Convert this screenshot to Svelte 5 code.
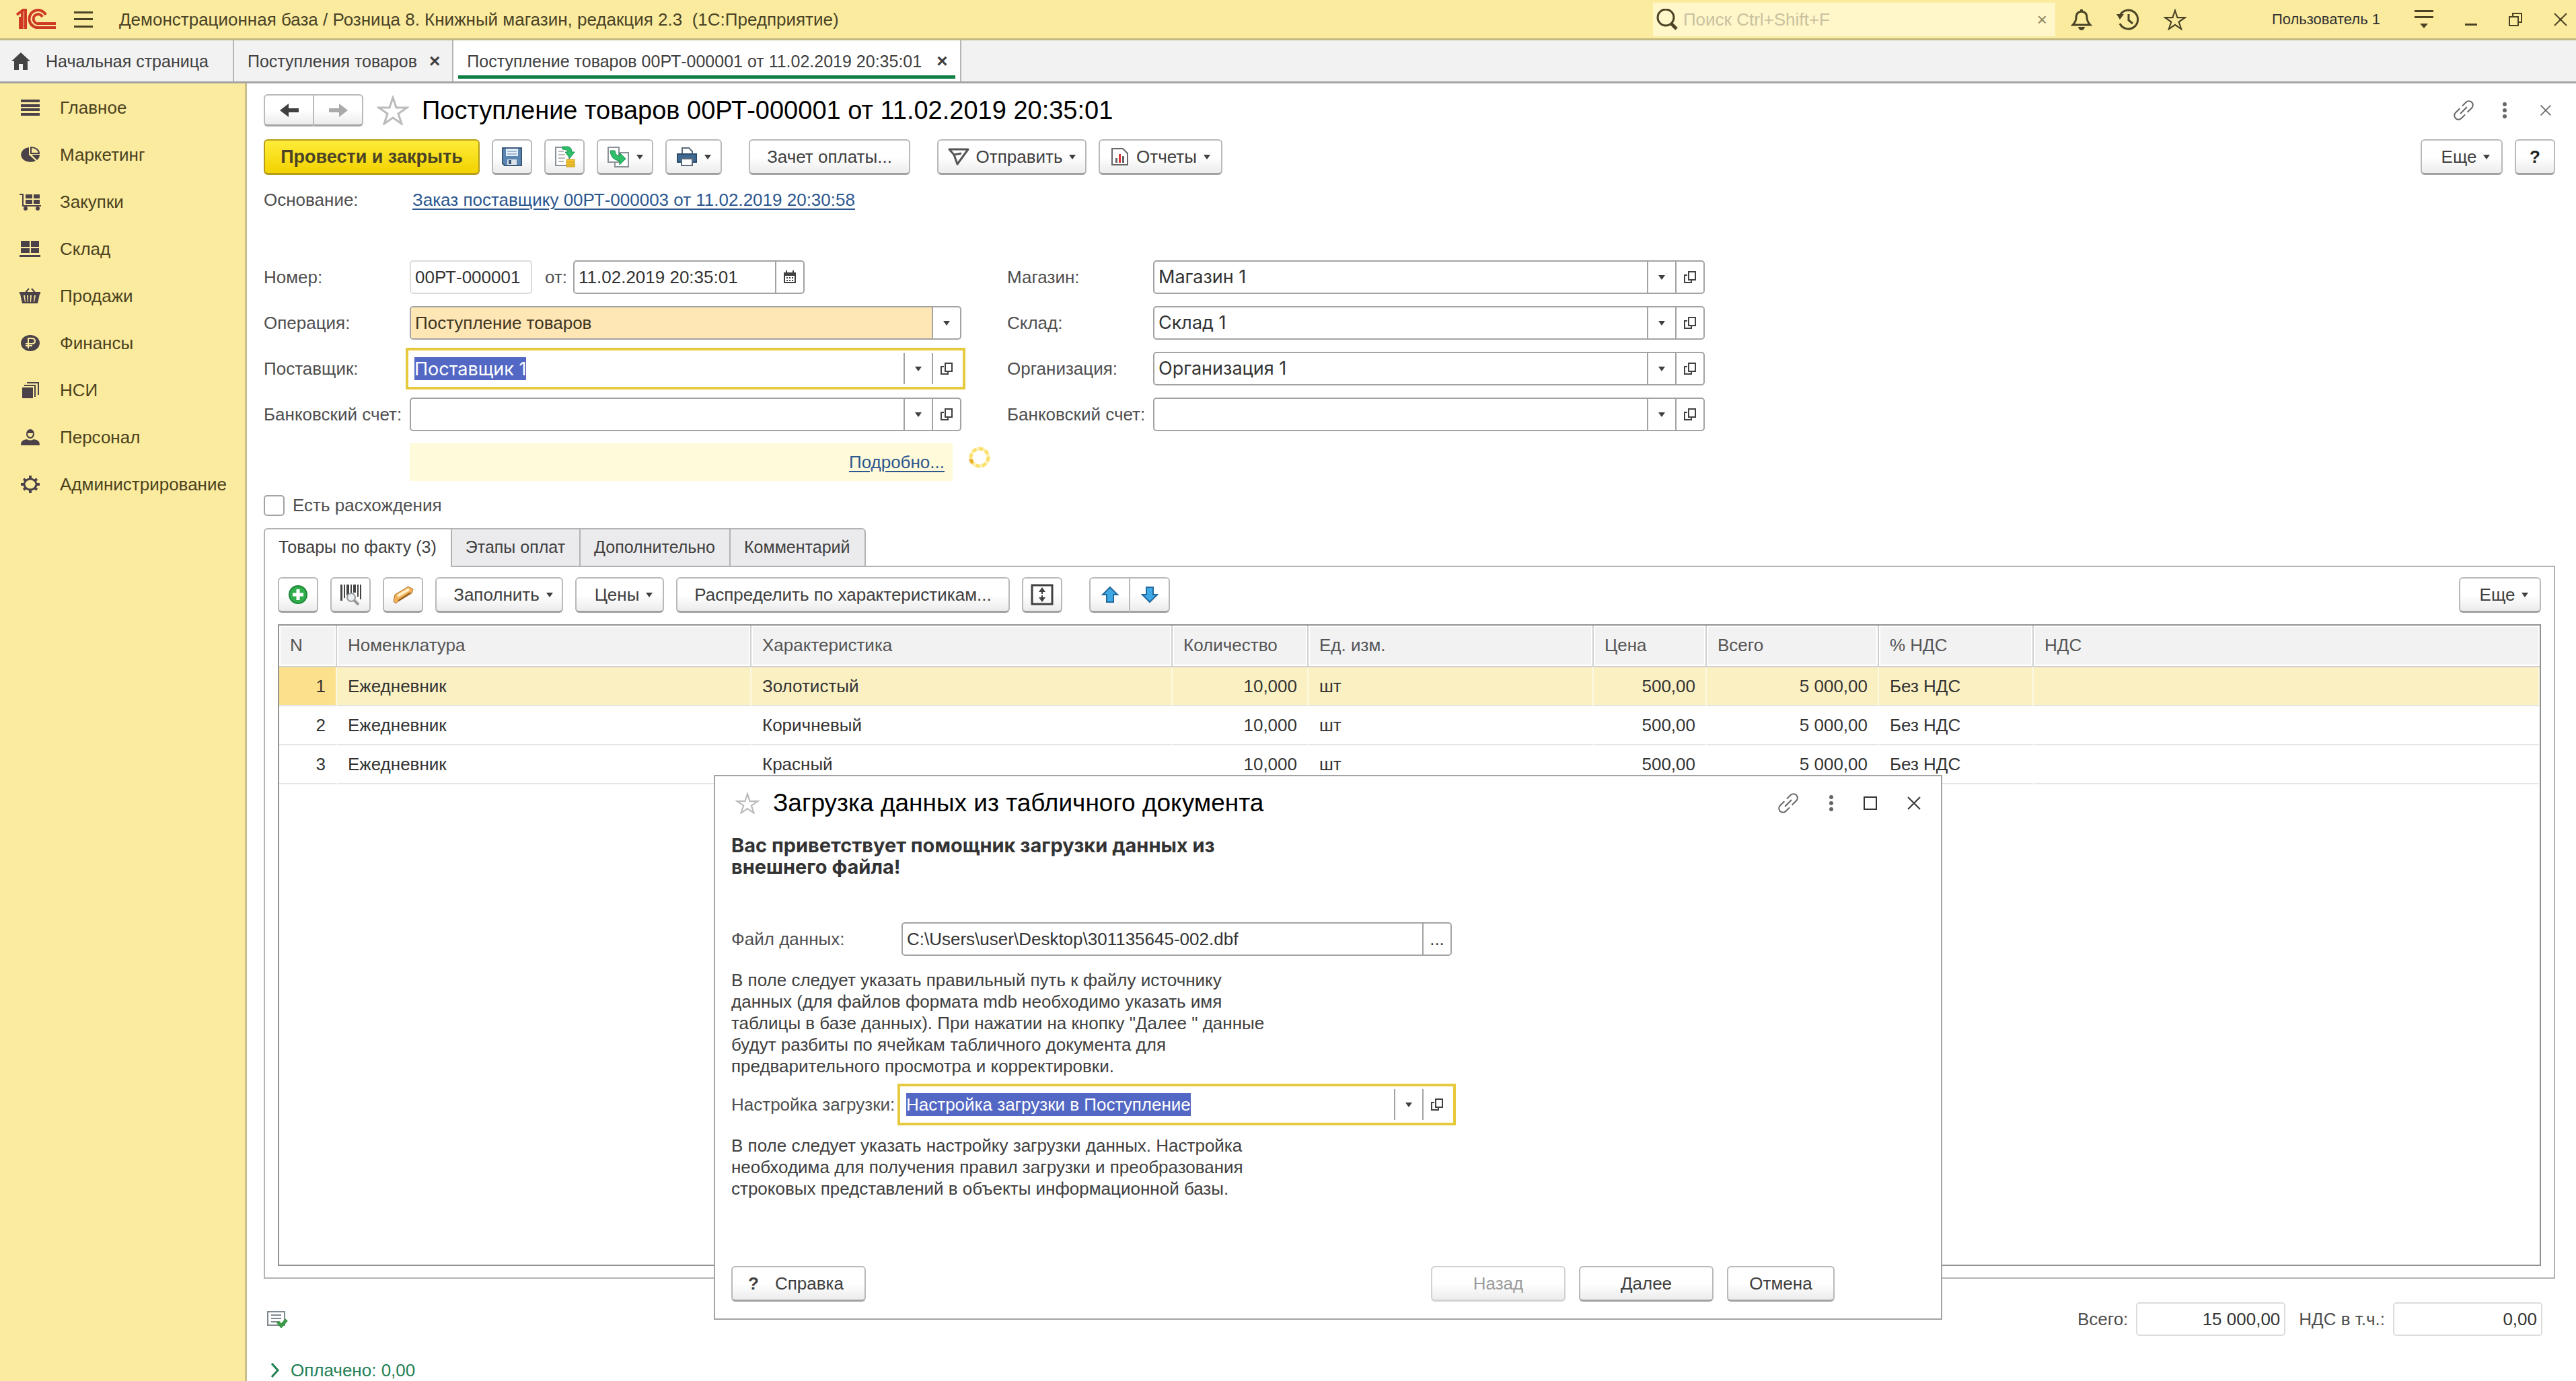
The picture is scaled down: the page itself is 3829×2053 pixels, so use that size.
<script lang="ts">
  type Section = { icon: string; title: string };
  type Row = { name: string; kind: string; qty: string; unit: string; price: string; total: string; vat: string };

  const sections: Section[] = [
    { icon: "main", title: "Главное" },
    { icon: "pie", title: "Маркетинг" },
    { icon: "cart", title: "Закупки" },
    { icon: "store", title: "Склад" },
    { icon: "basket", title: "Продажи" },
    { icon: "ruble", title: "Финансы" },
    { icon: "stack", title: "НСИ" },
    { icon: "person", title: "Персонал" },
    { icon: "gear", title: "Администрирование" },
  ];

  const rows: Row[] = ["Золотистый", "Коричневый", "Красный"].map((kind) => ({
    name: "Ежедневник", kind, qty: "10,000", unit: "шт", price: "500,00", total: "5 000,00", vat: "Без НДС",
  }));

  const docTabs = ["Товары по факту (3)", "Этапы оплат", "Дополнительно", "Комментарий"];

  let current = $state(0);
  let activeTab = $state(0);
  let mismatch = $state(false);

  // [width, height, markup]
  const icons: Record<string, [number, number, string]> = {
    main: [32, 26, `<path fill="currentColor" d="M2 1h28v4H2zM2 8h28v4H2zM2 14h28v4H2zM2 21h28v4H2z"/>`],
    pie: [32, 26, `<path fill="currentColor" d="M14 2v11l10 9A14 11 0 1 1 14 2zM18 13h12a14 11 0 0 1-4 8z"/><path fill="none" stroke="currentColor" stroke-width="2" d="M17 2v9h12A12 9 0 0 0 17 2z"/>`],
    cart: [32, 26, `<path fill="currentColor" d="M9 2h10v6H9zM21 2h9v6h-9zM9 10h10v6H9zM21 10h9v6h-9z"/><path fill="none" stroke="currentColor" stroke-width="2" d="M0 2h5v17h27"/><circle cx="9" cy="23" r="3" fill="currentColor"/><circle cx="27" cy="23" r="3" fill="currentColor"/>`],
    store: [32, 26, `<path fill="currentColor" d="M2 1h13v9H2zM17 1h12v9H17zM2 12h13v7H2zM17 12h12v7H17zM0 22h31v3H0z"/>`],
    basket: [32, 26, `<path fill="none" stroke="currentColor" stroke-width="2" d="M8 9l6-7M24 9l-6-7"/><path fill="currentColor" fill-rule="evenodd" d="M0 7h31v3h-1l-3 14H4L1 10H0zM6 12l2 10h1L8 12zM11 12l1 10h1V12zM16 12v10h1l1-10zM22 12l-1 10h1l2-10z"/>`],
    ruble: [32, 26, `<ellipse cx="16" cy="13" rx="14" ry="12" fill="currentColor"/><path fill="none" stroke="#fbeb9e" stroke-width="2" d="M13 21V6h5q5 0 5 4t-5 4H9M9 17h10"/>`],
    stack: [32, 26, `<path fill="currentColor" d="M4 9h16v16H4z"/><path fill="none" stroke="currentColor" stroke-width="2" d="M7 6h16v17M11 2h17v18"/>`],
    person: [32, 26, `<ellipse cx="16" cy="8" rx="6" ry="7" fill="currentColor"/><path fill="#fbeb9e" d="M12 7h8q0 5-4 6-4-1-4-6z"/><path fill="currentColor" d="M2 25q-1-8 9-9 5 3 10 0 10 1 9 9z"/>`],
    gear: [32, 26, `<ellipse cx="16" cy="13" rx="9" ry="8" fill="none" stroke="currentColor" stroke-width="3"/><path stroke="currentColor" stroke-width="4" d="M16 0v5M16 21v5M2 13h6M24 13h6M6 5l4 3M22 18l4 3M26 5l-4 3M10 18l-4 3"/>`],
    logo: [60, 32, `<g fill="none" stroke="#cf3a24" stroke-width="4"><path d="M1 9l8-6v27M6 30V12M14 30V2H9"/><path d="M44 9A13 13 0 1 0 34 28h25"/><path d="M39 12a7 7 0 1 0-5 10h25"/></g>`],
    burger: [30, 26, `<path fill="currentColor" d="M1 1h28v3H1zM1 11h28v3H1zM1 22h28v3H1z"/>`],
    home: [30, 26, `<path fill="currentColor" d="M15 0L1 13h4v13h7v-9h6v9h7V13h4z"/>`],
    search: [32, 32, `<circle cx="14" cy="13" r="12" fill="none" stroke="currentColor" stroke-width="3"/><path stroke="currentColor" stroke-width="5" d="M22 22l8 8"/>`],
    bell: [32, 32, `<path fill="none" stroke="currentColor" stroke-width="3" d="M3 24q5-5 5-11 0-8 8-9 8 1 8 9 0 6 5 11z"/><path fill="currentColor" d="M11 27h10q-1 5-5 5t-5-5zM14 1h4v4h-4z"/>`],
    history: [34, 32, `<path fill="none" stroke="currentColor" stroke-width="3" d="M5 10A14 14 0 1 1 5 22M18 8v9l6 5"/><path fill="currentColor" d="M0 8h11l-6 8z"/>`],
    star: [48, 44, `<path fill="none" stroke="currentColor" stroke-width="3" d="M24 3l5 15h16L32 27l5 15-13-9-13 9 5-15L3 18h16z"/>`],
    settings: [30, 30, `<path fill="currentColor" d="M1 1h28v3H1zM1 10h28v3H1zM9 21h12l-6 7z"/>`],
    minimize: [20, 32, `<path fill="currentColor" d="M1 22h18v3H1z"/>`],
    restore: [22, 22, `<path fill="none" stroke="currentColor" stroke-width="2" d="M7 7V2h13v13h-5M2 7h13v13H2z"/>`],
    cross: [22, 22, `<path fill="none" stroke="currentColor" stroke-width="2" d="M2 2l18 18M20 2L2 20"/>`],
    square: [22, 22, `<path fill="none" stroke="currentColor" stroke-width="2" d="M2 2h18v18H2z"/>`],
    dots: [8, 24, `<circle cx="4" cy="3" r="3" fill="currentColor"/><circle cx="4" cy="12" r="3" fill="currentColor"/><circle cx="4" cy="21" r="3" fill="currentColor"/>`],
    link: [34, 32, `<g transform="rotate(-45 17 16)" fill="none" stroke="currentColor" stroke-width="2"><path d="M15 10H6a6 6 0 0 0 0 12h8M19 22h9a6 6 0 0 0 0-12h-8M10 16h14"/></g>`],
    back: [28, 22, `<path fill="currentColor" d="M0 11L13 1v7h15v6H13v7z"/>`],
    forward: [28, 22, `<path fill="currentColor" d="M28 11L15 1v7H0v6h15v7z"/>`],
    caret: [10, 7, `<path fill="currentColor" d="M0 0h10L5 7z"/>`],
    open: [20, 20, `<path fill="none" stroke="currentColor" stroke-width="2" d="M8 2h10v12H8zM6 7H2v11h10v-3"/>`],
    save: [32, 30, `<path fill="#5b86b4" stroke="#3b5878" stroke-width="2" d="M2 2h28v26H5l-3-3z"/><path fill="#e6f0fa" d="M7 3h18v11H7z"/><path fill="#dce4ea" d="M9 19h14v8H9z"/><path fill="#3b5878" d="M11 20h4v6h-4z"/><path stroke="#9db9d4" stroke-width="2" d="M9 7h14M9 11h14"/>`],
    post: [32, 32, `<path fill="#fff" stroke="#8a9299" stroke-width="2" d="M3 2h20v27H3z"/><path stroke="#b9b9b9" stroke-width="2" d="M7 8h8M7 13h10M7 18h10M7 23h8"/><path fill="#2fbf6b" stroke="#159149" d="M13 1h8q6 1 6 8h4l-7 9-7-9h4q0-4-8-4z"/><path fill="#f4c531" stroke="#c79a17" d="M19 20h12v11H19zM19 24h12M19 28h12"/>`],
    create: [34, 32, `<path fill="#fff" stroke="#8a9299" stroke-width="2" d="M2 2h16v22H2zM18 10h14v21H12v-6"/><path fill="#2fbf6b" stroke="#159149" d="M5 7h7q1 8 7 8v-5l9 9-9 9v-6Q6 21 5 7z"/>`],
    print: [32, 30, `<path fill="#fff" stroke="#5b6b7b" stroke-width="2" d="M9 12V2h10l5 5v5"/><path fill="#3f6a94" stroke="#2d4c6c" stroke-width="2" d="M2 11h28v12H2z"/><path fill="#fff" stroke="#5b6b7b" stroke-width="2" d="M8 18h16v10H8z"/>`],
    send: [32, 26, `<path fill="none" stroke="#555" stroke-width="3" stroke-linejoin="round" d="M2 2h28L14 24 9 10 2 2zM9 10l11-2"/>`],
    report: [28, 28, `<path fill="#fff" stroke="#666" stroke-width="2" d="M2 2h16l7 7v17H2z"/><path fill="#666" d="M7 16h3v7H7zM17 13h3v10h-3z"/><path fill="#d33" d="M12 10h3v13h-3z"/>`],
    calendar: [20, 20, `<path fill="none" stroke="currentColor" stroke-width="2" d="M2 4h16v14H2zM5 0v5M15 0v5"/><path fill="currentColor" d="M2 4h16v4H2zM5 10h2v2H5zM9 10h2v2H9zM13 10h2v2h-2zM5 14h2v2H5zM9 14h2v2H9zM13 14h2v2h-2z"/>`],
    spinner: [36, 34, `<ellipse cx="18" cy="17" rx="13" ry="13" fill="none" stroke="#fdf1b5" stroke-width="5"/><ellipse cx="18" cy="17" rx="13" ry="13" fill="none" stroke="#fbdf6c" stroke-width="5" stroke-dasharray="6 4"/><path fill="none" stroke="#eab02c" stroke-width="5" d="M5 19q0 4 3 6"/>`],
    plus: [30, 30, `<circle cx="15" cy="15" r="13" fill="#31ae4c" stroke="#1d8837" stroke-width="2"/><path stroke="#fff" stroke-width="5" d="M15 7v16M7 15h16"/>`],
    barcode: [32, 32, `<path fill="#444" d="M1 1h3v24H1zM6 1h2v20H6zM10 1h4v16h-4zM16 1h2v14h-2zM20 1h4v12h-4zM26 1h2v18h-2zM30 1h2v22h-2z"/><circle cx="17" cy="20" r="6" fill="#e9eef2" stroke="#999" stroke-width="2"/><path stroke="#999" stroke-width="4" d="M21 24l7 7"/>`],
    scanner: [34, 28, `<path fill="#f3b25a" stroke="#a8702a" d="M3 24L5 14 25 2l7 4-2 6L10 24l-4 3z"/><path stroke="#fff0c8" stroke-width="4" d="M9 16L26 6"/><path stroke="#8e5a1e" stroke-width="2" d="M10 23l18-12"/>`],
    fit: [34, 32, `<path fill="none" stroke="currentColor" stroke-width="3" d="M2 2h30v28H2z"/><path fill="currentColor" d="M17 5l5 7h-4v3h-2v-3h-4zM17 27l-5-7h4v-3h2v3h4z"/>`],
    up: [26, 26, `<path fill="#3fa9e8" stroke="#22699c" stroke-width="2" d="M13 2l11 11h-6v11H8V13H2z"/>`],
    down: [26, 26, `<path fill="#3fa9e8" stroke="#22699c" stroke-width="2" d="M13 24L2 13h6V2h10v11h6z"/>`],
    posted: [32, 26, `<path fill="none" stroke="#7f8a90" stroke-width="2" d="M2 2h25v20H2zM7 7h15M7 12h15M7 17h12"/><path fill="none" stroke="#3a9a48" stroke-width="5" d="M17 17l5 6 8-9"/>`],
    chevron: [14, 22, `<path fill="none" stroke="currentColor" stroke-width="3" d="M2 1l9 10-9 10"/>`],
  };
</script>

{#snippet icon(name: string)}
  {@const [w, h, body] = icons[name]}
  <svg width={w} height={h} viewBox="0 0 {w} {h}" aria-hidden="true">{@html body}</svg>
{/snippet}

{#snippet combo(id: string, label: string, value: string)}
  <label for={id}>{label}:</label>
  <div class="field">
    <input {id} class="ref" type="text" {value} />
    <button aria-label="Выбрать">{@render icon("caret")}</button>
    <button aria-label="Открыть">{@render icon("open")}</button>
  </div>
{/snippet}

<div class="app">
  <header class="titlebar">
    <span class="logo">{@render icon("logo")}</span>
    <button class="flat burger" aria-label="Меню">{@render icon("burger")}</button>
    <span class="app-title">Демонстрационная база / Розница 8. Книжный магазин, редакция 2.3&nbsp; (1С:Предприятие)</span>
    <div class="search">
      {@render icon("search")}
      <input type="text" aria-label="Поиск" placeholder="Поиск Ctrl+Shift+F" />
      <button class="flat" aria-label="Очистить">×</button>
    </div>
    <div class="tools">
      <button class="flat" aria-label="Уведомления">{@render icon("bell")}</button>
      <button class="flat" aria-label="История">{@render icon("history")}</button>
      <button class="flat small-star" aria-label="Избранное">{@render icon("star")}</button>
    </div>
    <span class="user">Пользователь 1</span>
    <div class="winctl">
      <button class="flat" aria-label="Настройка">{@render icon("settings")}</button>
      <button class="flat" aria-label="Свернуть">{@render icon("minimize")}</button>
      <button class="flat" aria-label="Восстановить">{@render icon("restore")}</button>
      <button class="flat" aria-label="Закрыть">{@render icon("cross")}</button>
    </div>
  </header>

  <nav class="windows">
    <button class="win home">{@render icon("home")}Начальная страница</button>
    <button class="win">Поступления товаров <b>×</b></button>
    <button class="win active">Поступление товаров 00РТ-000001 от 11.02.2019 20:35:01 <b>×</b></button>
  </nav>

  <div class="body">
    <aside class="sections">
      {#each sections as s}
        <a href="#{s.icon}">{@render icon(s.icon)}{s.title}</a>
      {/each}
    </aside>

    <main>
      <div class="head">
        <div class="pair">
          <button class="btn" aria-label="Назад">{@render icon("back")}</button>
          <button class="btn dim" aria-label="Вперед">{@render icon("forward")}</button>
        </div>
        <button class="flat fav" aria-label="В избранное">{@render icon("star")}</button>
        <h1>Поступление товаров 00РТ-000001 от 11.02.2019 20:35:01</h1>
        <div class="head-tools">
          <button class="flat" aria-label="Ссылка">{@render icon("link")}</button>
          <button class="flat" aria-label="Действия">{@render icon("dots")}</button>
          <button class="flat close-small" aria-label="Закрыть">{@render icon("cross")}</button>
        </div>
      </div>

      <div class="bar">
        <button class="btn primary">Провести и закрыть</button>
        <button class="btn sq" aria-label="Записать">{@render icon("save")}</button>
        <button class="btn sq" aria-label="Провести">{@render icon("post")}</button>
        <button class="btn drop" aria-label="Создать на основании">{@render icon("create")}{@render icon("caret")}</button>
        <button class="btn drop" aria-label="Печать">{@render icon("print")}{@render icon("caret")}</button>
        <button class="btn pay">Зачет оплаты...</button>
        <button class="btn send">{@render icon("send")}<span>Отправить</span>{@render icon("caret")}</button>
        <button class="btn reports">{@render icon("report")}<span>Отчеты</span>{@render icon("caret")}</button>
        <button class="btn more push">Еще {@render icon("caret")}</button>
        <button class="btn sq q">?</button>
      </div>

      <div class="basis">
        <span>Основание:</span>
        <a href="#order">Заказ поставщику 00РТ-000003 от 11.02.2019 20:30:58</a>
      </div>

      <div class="form">
        <div class="col">
          <label for="num">Номер:</label>
          <div class="numrow">
            <div class="field light num"><input id="num" type="text" value="00РТ-000001" /></div>
            <label for="date">от:</label>
            <div class="field date">
              <input id="date" type="text" value="11.02.2019 20:35:01" />
              <button aria-label="Календарь">{@render icon("calendar")}</button>
            </div>
          </div>
          <label for="op">Операция:</label>
          <div class="field">
            <select id="op"><option>Поступление товаров</option></select>
            <button aria-label="Выбрать">{@render icon("caret")}</button>
          </div>
          <label for="supplier">Поставщик:</label>
          <div class="field focus">
            <input id="supplier" class="picked ref" type="text" value="Поставщик 1" />
            <button class="push" aria-label="Выбрать">{@render icon("caret")}</button>
            <button aria-label="Открыть">{@render icon("open")}</button>
          </div>
          {@render combo("bank1", "Банковский счет", "")}
        </div>
        <div class="col">
          {@render combo("shop", "Магазин", "Магазин 1")}
          {@render combo("stock", "Склад", "Склад 1")}
          {@render combo("org", "Организация", "Организация 1")}
          {@render combo("bank2", "Банковский счет", "")}
        </div>
      </div>

      <div class="notice">
        <div class="strip"><a href="#details">Подробно...</a></div>
        {@render icon("spinner")}
      </div>

      <label class="check"><input type="checkbox" bind:checked={mismatch} />Есть расхождения</label>

      <div class="tabs" role="tablist">
        {#each docTabs as t, i}
          <button role="tab" aria-selected={activeTab === i} class:on={activeTab === i} onclick={() => (activeTab = i)}>{t}</button>
        {/each}
      </div>

      <section class="panel">
        <div class="bar">
          <button class="btn sq" aria-label="Добавить">{@render icon("plus")}</button>
          <button class="btn sq" aria-label="Поиск по штрихкоду">{@render icon("barcode")}</button>
          <button class="btn sq" aria-label="Сканер">{@render icon("scanner")}</button>
          <button class="btn fill">Заполнить {@render icon("caret")}</button>
          <button class="btn prices">Цены {@render icon("caret")}</button>
          <button class="btn spread">Распределить по характеристикам...</button>
          <button class="btn sq" aria-label="Высота строк">{@render icon("fit")}</button>
          <div class="pair move">
            <button class="btn" aria-label="Вверх">{@render icon("up")}</button>
            <button class="btn" aria-label="Вниз">{@render icon("down")}</button>
          </div>
          <button class="btn more push">Еще {@render icon("caret")}</button>
        </div>

        <div class="grid">
          <table>
            <colgroup>
              <col class="c-n" /><col class="c-name" /><col class="c-kind" /><col class="c-qty" /><col class="c-unit" />
              <col class="c-price" /><col class="c-total" /><col class="c-vat" /><col />
            </colgroup>
            <thead>
              <tr>
                <th>N</th><th>Номенклатура</th><th>Характеристика</th><th>Количество</th><th>Ед. изм.</th>
                <th>Цена</th><th>Всего</th><th>% НДС</th><th>НДС</th>
              </tr>
            </thead>
            <tbody>
              {#each rows as r, i}
                <tr class:sel={current === i} onclick={() => (current = i)}>
                  <td class="r">{i + 1}</td>
                  <td>{r.name}</td>
                  <td>{r.kind}</td>
                  <td class="r">{r.qty}</td>
                  <td>{r.unit}</td>
                  <td class="r">{r.price}</td>
                  <td class="r">{r.total}</td>
                  <td>{r.vat}</td>
                  <td></td>
                </tr>
              {/each}
            </tbody>
          </table>
        </div>
      </section>

      <footer>
        {@render icon("posted")}
        <label class="push" for="total">Всего:</label>
        <div class="field light sum"><input id="total" type="text" value="15 000,00" readonly /></div>
        <label for="vat">НДС в т.ч.:</label>
        <div class="field light sum"><input id="vat" type="text" value="0,00" readonly /></div>
      </footer>
      <button class="flat paid">{@render icon("chevron")}Оплачено: 0,00</button>
    </main>
  </div>

  <div class="dialog" role="dialog" aria-labelledby="dlg-title">
    <div class="dlg-head">
      <button class="flat dlg-star" aria-label="В избранное">{@render icon("star")}</button>
      <h2 id="dlg-title">Загрузка данных из табличного документа</h2>
      <div class="dlg-tools">
        <button class="flat grey" aria-label="Ссылка">{@render icon("link")}</button>
        <button class="flat grey" aria-label="Действия">{@render icon("dots")}</button>
        <button class="flat" aria-label="Развернуть">{@render icon("square")}</button>
        <button class="flat" aria-label="Закрыть">{@render icon("cross")}</button>
      </div>
    </div>
    <p class="hello">Вас приветствует помощник загрузки данных из<br />внешнего файла!</p>
    <div class="dlg-row">
      <label for="file">Файл данных:</label>
      <div class="field">
        <input id="file" type="text" value="C:\Users\user\Desktop\301135645-002.dbf" />
        <button aria-label="Выбрать файл">...</button>
      </div>
    </div>
    <p>
      В поле следует указать правильный путь к файлу источнику<br />
      данных (для файлов формата mdb необходимо указать имя<br />
      таблицы в базе данных). При нажатии на кнопку "Далее " данные<br />
      будут разбиты по ячейкам табличного документа для<br />
      предварительного просмотра и корректировки.
    </p>
    <div class="dlg-row">
      <label for="preset">Настройка загрузки:</label>
      <div class="field focus">
        <input id="preset" class="picked" type="text" value="Настройка загрузки в Поступление" />
        <button class="push" aria-label="Выбрать">{@render icon("caret")}</button>
        <button aria-label="Открыть">{@render icon("open")}</button>
      </div>
    </div>
    <p>
      В поле следует указать настройку загрузки данных. Настройка<br />
      необходима для получения правил загрузки и преобразования<br />
      строковых представлений в объекты информационной базы.
    </p>
    <div class="dlg-foot">
      <button class="btn help"><b>?</b>Справка</button>
      <button class="btn wide push" disabled>Назад</button>
      <button class="btn wide">Далее</button>
      <button class="btn cancel">Отмена</button>
    </div>
  </div>
</div>

<style>
  :global(body) { margin: 0; }
  .app { --text: #404040; --label: #4f4f4f; --line: #a3a3a3; --yellow: #fbeb9e;
    position: relative; display: flex; flex-direction: column; min-height: 100vh;
    background: #fff; color: var(--text); font: 26px/32px "Liberation Sans", Arial, sans-serif; }
  .app *, .app { box-sizing: border-box; }
  svg { display: block; flex: none; }
  button, input, select { font: inherit; color: inherit; margin: 0; }
  button { display: flex; align-items: center; justify-content: center; padding: 0; white-space: nowrap; }
  p, h1, h2 { margin: 0; font-weight: 400; }
  a { color: #2c578f; text-underline-offset: 4px; text-decoration-thickness: 2px; }
  .push { margin-left: auto; }
  .flat { border: 0; background: none; }

  .titlebar { display: flex; align-items: center; height: 60px; background: var(--yellow);
    border-bottom: 3px solid #c2b880; padding: 0 12px 0 24px; color: #4a4326; }
  .burger { margin: 0 38px 0 25px; }
  .app-title { flex: 1; }
  .search { display: flex; align-items: center; gap: 8px; width: 598px; height: 50px; padding: 0 12px 0 5px; background: #fff6c9; }
  .search input { flex: 1; min-width: 0; border: 0; background: none; padding: 0; }
  .search input::placeholder { color: #c9c2a0; opacity: 1; }
  .search button { color: #8f8963; }
  .tools { display: flex; align-items: center; gap: 36px; margin-left: 23px; }
  .small-star svg { width: 34px; height: 32px; }
  .user { margin-left: 127px; font-size: 22px; color: #333; }
  .winctl { display: flex; align-items: center; gap: 45px; margin-left: 50px; }

  .windows { display: flex; height: 64px; background: #f2f2f2; border-bottom: 3px solid var(--line); font-size: 25px; }
  .win { gap: 18px; padding: 0 18px 0 20px; border: 0; border-right: 2px solid #b5b5b5; background: none; }
  .win b { font-size: 28px; font-weight: 700; }
  .home { gap: 22px; width: 348px; padding: 0 16px; justify-content: flex-start; }
  .home svg { color: #444; }
  .win.active { gap: 22px; background: linear-gradient(#0f8043, #0f8043) center bottom 4px / calc(100% - 14px) 5px no-repeat, #fff; }

  .body { display: flex; flex: 1; }
  .sections { width: 367px; flex: none; padding-top: 1px; background: var(--yellow); border-right: 3px solid #c8bf8c; }
  .sections a { display: flex; align-items: center; gap: 28px; height: 70px; padding-left: 29px;
    color: #4b421e; text-decoration: none; }
  .sections svg { color: #4b4148; }

  main { flex: 1; min-width: 0; display: flex; flex-direction: column; padding: 16px 31px 0 25px; }
  .head { display: flex; align-items: center; height: 48px; }
  .pair { display: flex; height: 100%; }
  .pair .btn { width: 74px; }
  .pair .btn:first-child { border-radius: 6px 0 0 6px; border-right-width: 1px; }
  .pair .btn:last-child { border-radius: 0 6px 6px 0; border-left-width: 1px; }
  .pair .dim { color: #aaa; }
  .fav { margin: 0 19px 0 20px; color: #bbb; }
  h1 { flex: 1; font-size: 38px; line-height: 44px; color: #000; }
  .head-tools { display: flex; align-items: center; gap: 40px; color: #666; padding-right: 5px; }
  .close-small { margin-left: 8px; }
  .close-small svg { width: 18px; height: 18px; }

  .bar { display: flex; gap: 18px; height: 53px; margin-top: 19px; }
  .btn { border: 2px solid #b9b9b9; border-bottom: 3px solid #a2a2a2; border-radius: 6px; gap: 10px;
    background: linear-gradient(#fff 50%, #ececec); color: var(--text); }
  .btn:disabled { color: #9b9b9b; border-color: #d2d2d2; }
  .primary { width: 321px; border-color: #b59d1b; background: linear-gradient(#ffec3a, #f2d200); font-size: 27px; font-weight: 700; color: #4a4326; }
  .sq { width: 60px; }
  .q { font-weight: 700; color: #222; }
  .drop { width: 84px; }
  .pay { width: 240px; margin-left: 22px; }
  .send { width: 222px; margin-left: 22px; }
  .reports { width: 184px; }
  .more { width: 122px; padding-left: 12px; }

  .basis { display: flex; margin-top: 21px; color: var(--label); }
  .basis span { width: 221px; }

  .form { display: flex; gap: 68px; margin-top: 74px; }
  .col { display: grid; grid-template-columns: 217px 820px; row-gap: 18px; align-items: center; }
  label { color: var(--label); white-space: nowrap; }
  .field { display: flex; height: 50px; border: 2px solid var(--line); border-radius: 5px; background: #fff; overflow: hidden; }
  .field input { flex: 1; min-width: 0; border: 0; padding: 0 6px; background: none; color: #333; outline: 0; }
  .field .ref { font-family: Inter, "Liberation Sans", sans-serif; font-size: 27px; }
  .field button { flex: none; width: 42px; border: 0; border-left: 2px solid var(--line); background: none; }
  .field select { flex: 1; appearance: none; border: 0; padding: 0 6px; background: #fee6b5; color: #40361f; }
  .light { border-color: #dcdcdc; }
  .numrow { display: flex; align-items: center; }
  .numrow label { margin: 0 9px 0 19px; }
  .num { width: 182px; }
  .date { width: 344px; }
  .focus { height: 62px; margin: -6px; padding: 4px 4px 4px 0; border: 4px solid #e6c93d; border-radius: 0; align-items: center; }
  .focus .picked { flex: none; field-sizing: content; height: 34px; margin-left: 9px; padding: 0; background: #5268c4; color: #fff; }
  .focus button { height: 46px; }

  .notice { display: flex; gap: 22px; height: 56px; margin: 18px 0 0 217px; }
  .strip { display: flex; align-items: center; justify-content: flex-end; width: 807px; padding-right: 12px; background: #fffad9; }
  .notice > :global(svg) { margin-top: 4px; }
  .check { display: flex; align-items: center; gap: 12px; margin-top: 20px; }
  .check input { appearance: none; width: 31px; height: 31px; border: 2px solid var(--line); border-radius: 5px; background: #fff; }
  .check input:checked { background: #5268c4; }

  .tabs { display: flex; margin-top: 18px; font-size: 25px; }
  .tabs button { height: 56px; padding: 0 21px 2px 20px; border: 2px solid #b3b3b3; border-width: 2px 2px 0 0; background: #ebebed; }
  .tabs button:first-child { border-left-width: 2px; border-radius: 6px 0 0 0; }
  .tabs button:last-child { border-radius: 0 6px 0 0; }
  .tabs .on { height: 58px; margin-bottom: -2px; padding-bottom: 4px; background: #fff; z-index: 1; }

  .panel { flex: 1; display: flex; flex-direction: column; padding: 15px 19px 17px; border: 2px solid #b3b3b3; }
  .panel .bar { margin-top: 0; }
  .fill { width: 190px; padding-left: 12px; }
  .prices { width: 132px; padding-left: 12px; }
  .spread { width: 496px; }
  .move { margin-left: 22px; }
  .move .btn { width: 60px; }
  .grid { flex: 1; margin-top: 17px; border: 2px solid #929292; }
  table { width: 100%; table-layout: fixed; border-collapse: separate; border-spacing: 0; }
  .c-n { width: 86px; } .c-name { width: 616px; } .c-kind { width: 626px; }
  .c-qty { width: 202px; } .c-unit { width: 424px; } .c-price { width: 168px; }
  .c-total { width: 256px; } .c-vat { width: 230px; }
  th { height: 62px; padding: 0 15px 2px 16px; text-align: left; font-weight: 400; color: #555; background: #f2f2f3;
    border-right: 2px solid #cfcfcf; border-bottom: 2px solid #cfcfcf; box-shadow: inset 0 0 0 2px #fff; }
  th:last-child { border-right: 0; }
  td { height: 58px; padding: 0 15px 0 16px; color: #333; border-right: 2px solid transparent; border-bottom: 2px solid #e6e6e6; }
  .r { text-align: right; }
  .sel td { background: #fbf0c2; border-right-color: #fdf8e4; }
  .sel td:first-child { background: #fde08b; }

  footer { display: flex; align-items: center; gap: 12px; height: 50px; margin-top: 35px; padding: 0 19px 0 4px; }
  footer label:not(.push) { margin-left: 8px; }
  .sum { width: 222px; }
  .sum input { text-align: right; }
  .paid { align-self: flex-start; gap: 16px; height: 32px; margin: 35px 0 0 10px; color: #1f8055; }

  .dialog { position: absolute; left: 1061px; top: 1152px; width: 1826px; padding: 18px 26px 25px 24px;
    background: #fff; border: 2px solid var(--line); }
  .dlg-head { display: flex; align-items: center; height: 44px; }
  .dlg-star { margin: 0 19px 0 5px; color: #bbb; }
  .dlg-star svg { width: 38px; height: 32px; }
  h2 { flex: 1; font-size: 37px; line-height: 40px; color: #000; }
  .dlg-tools { display: flex; align-items: center; gap: 43px; padding-right: 3px; color: #333; }
  .grey { color: #666; }
  .hello { margin: 25px 0 66px; font-family: Inter, "Liberation Sans", sans-serif; font-size: 29px; font-weight: 700; color: #333; }
  .dlg-row { display: grid; grid-template-columns: 253px 818px; align-items: center; }
  .dialog p:not(.hello) { margin: 20px 0 16px; }
  .dlg-foot { display: flex; gap: 20px; height: 53px; margin-top: 99px; padding-right: 132px; }
  .help { width: 200px; gap: 24px; padding-right: 8px; }
  .wide { width: 200px; }
  .cancel { width: 160px; }
</style>
